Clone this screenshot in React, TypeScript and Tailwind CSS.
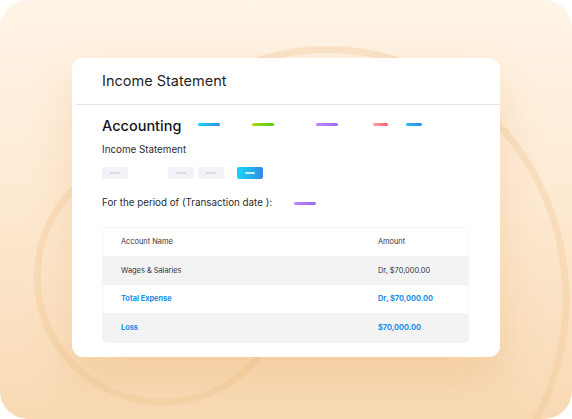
import React from 'react';

const rows = [
  { name: 'Account Name', amount: 'Amount', kind: 'head', h: 'h-[28px]' },
  { name: 'Wages & Salaries', amount: 'Dr, $70,000.00', kind: 'grey', h: 'h-[29px]' },
  { name: 'Total Expense', amount: 'Dr, $70,000.00', kind: 'total', h: 'h-[28px]' },
  { name: 'Loss', amount: '$70,000.00', kind: 'loss', h: 'h-[29px]' },
];

const Dash = ({ className }: { className: string }) => (
  <div className={`h-[3px] rounded-full shrink-0 ${className}`}></div>
);

const GhostButton = () => (
  <div className="w-[26px] h-[12px] rounded-[2px] bg-[#f2f3f8] flex items-center justify-center">
    <div className="w-[10px] h-[2px] bg-[#dcdcdf] rounded-full"></div>
  </div>
);

const App = () => {
  return (
    <div className="w-[572px] h-[419px] bg-white font-['Inter',sans-serif]">
      <div className="relative w-[572px] h-[419px] rounded-[28px] overflow-hidden bg-gradient-to-b from-[#fff4e7] via-[#fde9d1] to-[#f8d9b3]">
        {/* decorative ring swirl */}
        <svg className="absolute inset-0" width="572" height="419" viewBox="0 0 572 419" fill="none">
          <path d="M 160 122 A 238 249 0 0 1 530 430" stroke="#f0c58e" strokeOpacity="0.32" strokeWidth="7" />
          <path d="M 251 189 A 125 125 0 1 0 271 339" stroke="#f0c58e" strokeOpacity="0.32" strokeWidth="7" />
        </svg>

        <div className="relative pt-[58px] pl-[72px]">
          <div className="w-[428px] h-[299px] bg-white rounded-[11px] shadow-[0_22px_40px_rgba(225,150,70,0.22)]">
            {/* Header */}
            <div className="h-[46px] flex items-center pl-[30px] text-[14.5px] text-[#1f1f24]">
              Income Statement
            </div>
            <div className="ml-[3px] h-px bg-[#e6e6ea]"></div>

            <div className="pl-[30px] pr-[31px]">
              <div className="flex items-center mt-[11px] h-[20px]">
                <span className="w-[96px] shrink-0 text-[14.5px] font-medium text-[#16161a]">Accounting</span>
                <Dash className="w-[22px] -mt-[3px] bg-gradient-to-r from-[#12d2f5] to-[#2f8ee6]" />
                <Dash className="ml-[32px] w-[22px] -mt-[3px] bg-gradient-to-r from-[#a6da12] to-[#4fcb0c]" />
                <Dash className="ml-[42px] w-[22px] -mt-[3px] bg-gradient-to-r from-[#bd84fb] to-[#9b6cf0]" />
                <Dash className="ml-[35px] w-[15px] -mt-[3px] bg-gradient-to-r from-[#fba8a4] to-[#f05a6c]" />
                <Dash className="ml-[18px] w-[16px] -mt-[3px] bg-gradient-to-r from-[#2fb6f0] to-[#2f8ee6]" />
              </div>

              <div className="mt-[7px] text-[9.8px] text-[#2a2a30] leading-[14px]">Income Statement</div>

              <div className="flex items-center mt-[10px]">
                <GhostButton />
                <div className="ml-[40px]"><GhostButton /></div>
                <div className="ml-[4px]"><GhostButton /></div>
                <div className="ml-[13px] w-[26px] h-[12px] rounded-[2px] bg-gradient-to-r from-[#10d6f6] to-[#3189e6] flex items-center justify-center">
                  <div className="w-[10px] h-[2px] bg-[#c9f1fc] rounded-full"></div>
                </div>
              </div>

              <div className="flex items-center mt-[17px] h-[14px]">
                <span className="w-[192px] shrink-0 text-[9.8px] text-[#2a2a30]">For the period of (Transaction date ):</span>
                <Dash className="w-[22px] bg-gradient-to-r from-[#bd84fb] to-[#9b6cf0]" />
              </div>

              <div className="mt-[17px] rounded-[4px] border border-[#f3f3f9] overflow-hidden">
                {rows.map((r, i) => {
                  const grey = r.kind === 'grey' || r.kind === 'loss';
                  const blue = r.kind === 'total' || r.kind === 'loss';
                  return (
                    <div
                      key={i}
                      className={`${r.h} flex items-center pl-[18px] text-[7.4px] ${grey ? 'bg-[#f3f3f4]' : 'bg-white'} ${blue ? 'text-[#1690e8] font-bold' : 'text-[#34343a]'}`}
                    >
                      <div className="w-[257px]">{r.name}</div>
                      <div>{r.amount}</div>
                    </div>
                  );
                })}
              </div>
            </div>
          </div>
        </div>
      </div>
    </div>
  );
};

export default App;
